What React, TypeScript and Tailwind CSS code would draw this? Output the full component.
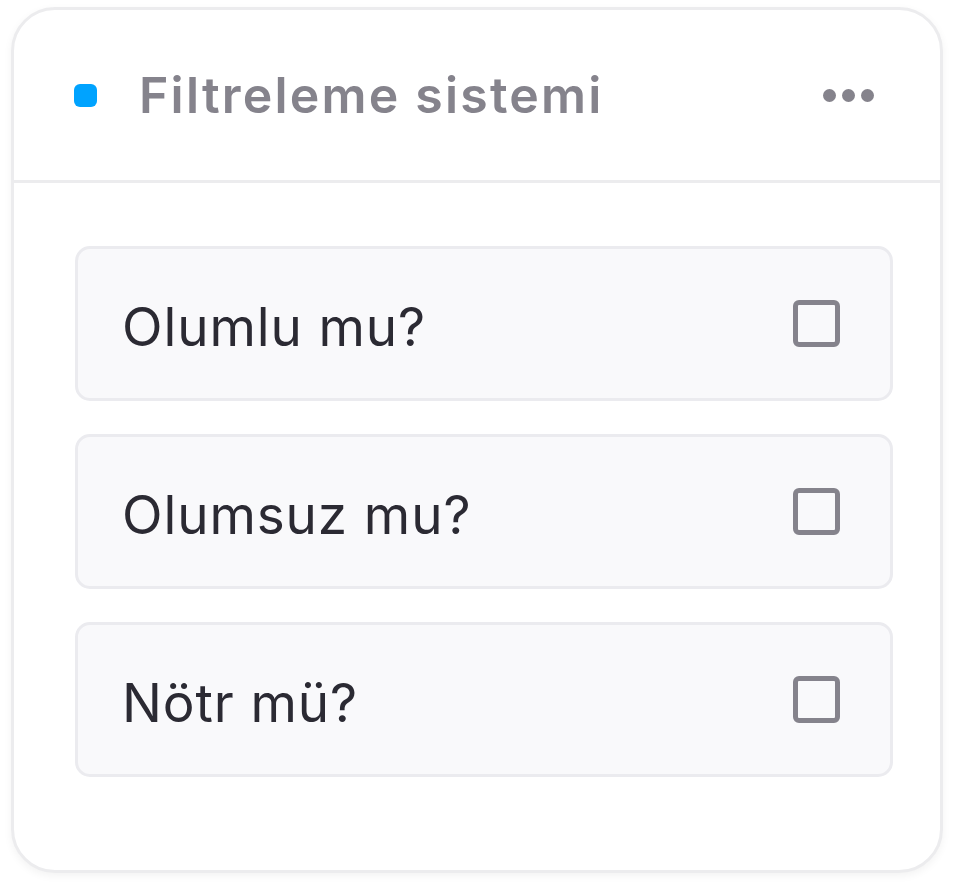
import { useState } from 'react'

const options = ['Olumlu mu?', 'Olumsuz mu?', 'Nötr mü?']

export default function App(){
  const [checked,setChecked]=useState<Record<string,boolean>>({})

  return (
    <div className="min-h-screen bg-white pl-[11px] pt-[7px]" style={{fontFamily:'Inter, "Noto Sans", sans-serif'}}>
      <div className="w-[932px] h-[866px] rounded-[44px] border-[3px] border-[#ececee] bg-white shadow-[0_3px_8px_rgba(0,0,0,0.05)] flex flex-col">
        <div className="h-[173px] flex items-center pl-[60px] pr-[66px] border-b-[3px] border-[#ececee] shrink-0">
          <span className="w-[23px] h-[23px] rounded-[6px] bg-[#00a3ff]" />
          <h1 className="ml-[42px] text-[50px] font-semibold text-[#85838c] tracking-[2.2px] leading-none">Filtreleme sistemi</h1>
          <button className="ml-auto flex gap-[6px] items-center">
            <span className="w-[13px] h-[13px] rounded-full bg-[#85838c]" />
            <span className="w-[13px] h-[13px] rounded-full bg-[#85838c]" />
            <span className="w-[13px] h-[13px] rounded-full bg-[#85838c]" />
          </button>
        </div>
        <div className="pt-[63px] pl-[61px] pr-[47px] flex flex-col gap-[33px]">
          {options.map(o=>(
            <label key={o} className="h-[155px] rounded-[15px] border-[3px] border-[#ebebef] bg-[#f9f9fb] flex items-center pl-[44px] pr-[50px] cursor-pointer">
              <span className="pt-[7px] text-[53px] text-[#2b2a33] tracking-[0.9px] leading-none">{o}</span>
              <input type="checkbox" className="sr-only" checked={!!checked[o]} onChange={e=>setChecked(c=>({...c,[o]:e.target.checked}))} />
              <span className="ml-auto w-[47px] h-[47px] rounded-[6px] border-[5px] border-[#85838c] flex items-center justify-center">
                {checked[o] && <span className="w-[21px] h-[21px] rounded-[2px] bg-[#85838c]" />}
              </span>
            </label>
          ))}
        </div>
      </div>
    </div>
  )
}
